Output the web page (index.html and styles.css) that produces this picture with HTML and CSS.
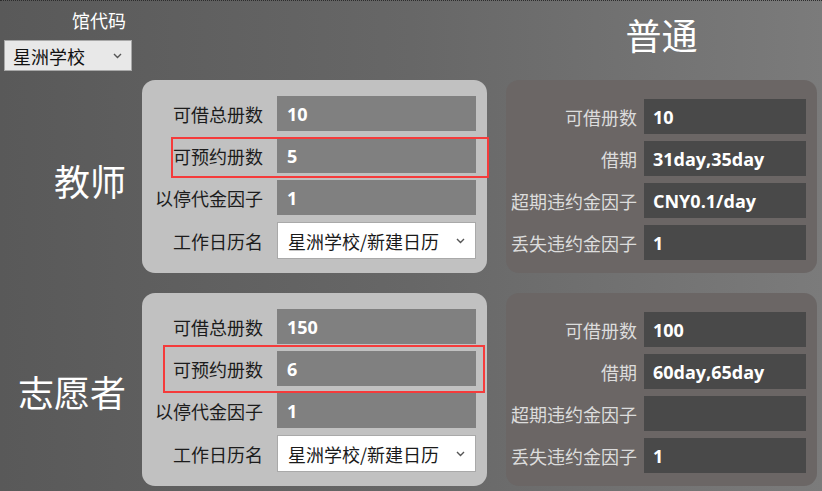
FILE: index.html
```html
<!DOCTYPE html>
<html lang="zh-CN">
<head>
<meta charset="utf-8">
<title>借阅规则</title>
<link rel="stylesheet" href="styles.css">
</head>
<body>
<div class="page">
  <div class="lib">
    <div class="lib-label">馆代码</div>
    <div class="lib-select">星洲学校
      <svg class="chev" width="9" height="6" viewBox="0 0 9 6"><polyline points="1,1 4.5,4.5 8,1" fill="none" stroke="#555" stroke-width="1.4"/></svg>
    </div>
  </div>
  <div class="type-title">普通</div>

  <div class="role role-teacher">教师</div>
  <div class="panel light">
    <div class="lbl">可借总册数</div><div class="val">10</div>
    <div class="lbl">可预约册数</div><div class="val">5</div>
    <div class="lbl">以停代金因子</div><div class="val">1</div>
    <div class="lbl">工作日历名</div>
    <div class="cal">星洲学校/新建日历
      <svg class="chev" width="9" height="6" viewBox="0 0 9 6"><polyline points="1,1 4.5,4.5 8,1" fill="none" stroke="#555" stroke-width="1.4"/></svg>
    </div>
    <div class="mark mark-a"></div>
  </div>
  <div class="panel dark">
    <div class="lbl">可借册数</div><div class="val">10</div>
    <div class="lbl">借期</div><div class="val">31day,35day</div>
    <div class="lbl">超期违约金因子</div><div class="val">CNY0.1/day</div>
    <div class="lbl">丢失违约金因子</div><div class="val">1</div>
  </div>

  <div class="role role-vol">志愿者</div>
  <div class="panel light lower">
    <div class="lbl">可借总册数</div><div class="val">150</div>
    <div class="lbl">可预约册数</div><div class="val">6</div>
    <div class="lbl">以停代金因子</div><div class="val">1</div>
    <div class="lbl">工作日历名</div>
    <div class="cal">星洲学校/新建日历
      <svg class="chev" width="9" height="6" viewBox="0 0 9 6"><polyline points="1,1 4.5,4.5 8,1" fill="none" stroke="#555" stroke-width="1.4"/></svg>
    </div>
    <div class="mark mark-b"></div>
  </div>
  <div class="panel dark lower">
    <div class="lbl">可借册数</div><div class="val">100</div>
    <div class="lbl">借期</div><div class="val">60day,65day</div>
    <div class="lbl">超期违约金因子</div><div class="val"></div>
    <div class="lbl">丢失违约金因子</div><div class="val">1</div>
  </div>
</div>
</body>
</html>
```

FILE: styles.css
```css
html, body {
  margin: 0;
  padding: 0;
}
body {
  width: 822px;
  height: 491px;
  overflow: hidden;
  background: linear-gradient(to right, #595959 0%, #676767 50%, #7b7b7b 100%);
  font-family: "Noto Sans CJK SC", "Noto Sans", sans-serif;
}
.page {
  border-top: 1px dotted #2c2c2c;
  display: grid;
  grid-template-columns: 142px 345px 19px 311px;
  grid-template-rows: 79px 193px 213px;
}

.lib {
  grid-column: 1;
  grid-row: 1;
  display: flex;
  flex-direction: column;
  align-items: flex-start;
}
.lib-label {
  align-self: stretch;
  text-align: right;
  padding-right: 16px;
  margin-top: 7px;
  font-size: 18px;
  line-height: 24px;
  color: #ffffff;
}
.lib-select {
  margin: 8px 0 0 4px;
  width: 128px;
  height: 31px;
  box-sizing: border-box;
  background: #e8e8e8;
  border: 1px solid #a8a8a8;
  display: flex;
  align-items: center;
  justify-content: space-between;
  padding: 0 9px 0 8px;
  font-size: 18px;
  color: #111;
}
.type-title {
  grid-column: 4;
  grid-row: 1;
  text-align: center;
  font-size: 36px;
  line-height: 44px;
  padding-top: 11px;
  color: #ffffff;
}

.role {
  grid-column: 1;
  align-self: center;
  text-align: right;
  padding-right: 16px;
  font-size: 36px;
  line-height: 44px;
  color: #ffffff;
}
.role-teacher { grid-row: 2; padding-top: 6px; }
.role-vol { grid-row: 3; margin-top: 20px; padding-top: 2px; }

.panel {
  position: relative;
  display: grid;
  align-content: start;
  align-items: center;
  row-gap: 7px;
  border-radius: 13px;
  box-sizing: border-box;
  height: 193px;
  grid-row: 2;
}
.panel.lower { margin-top: 20px; grid-row: 3; }
.panel.light {
  grid-column: 2;
  background: #c1c1c1;
  grid-template-columns: 108px 199px;
  grid-template-rows: 35px 35px 35px 37px;
  column-gap: 14px;
  padding: 16px 11px 0 13px;
}
.panel.dark {
  grid-column: 4;
  background: #6b6665;
  grid-template-columns: 126px 162px;
  grid-template-rows: 35px 35px 35px 35px;
  column-gap: 7px;
  padding: 19px 11px 0 5px;
}
.lbl {
  text-align: right;
  font-size: 18px;
  line-height: 24px;
  white-space: nowrap;
}
.light .lbl { color: #1c1c1c; }
.dark .lbl { color: #dcdcdc; }

.val {
  height: 100%;
  display: flex;
  align-items: center;
  font-family: "Open Sans", "Noto Sans", sans-serif;
  font-weight: 700;
  font-size: 18px;
  color: #ffffff;
  box-sizing: border-box;
}
.light .val { background: #808080; padding-left: 10px; }
.dark .val { background: #494949; padding-left: 9px; }

.cal {
  height: 100%;
  box-sizing: border-box;
  background: #ffffff;
  border: 1px solid #a9a9a9;
  display: flex;
  align-items: center;
  justify-content: space-between;
  padding: 0 10px 0 10px;
  font-size: 18px;
  color: #1a1a1a;
}
.chev { flex: none; }

.mark {
  position: absolute;
  border: 2px solid #f53b3b;
  box-sizing: border-box;
}
.mark-a { left: 29px; top: 57px; width: 318px; height: 41px; }
.mark-b { left: 21px; top: 52px; width: 322px; height: 48px; }
```
